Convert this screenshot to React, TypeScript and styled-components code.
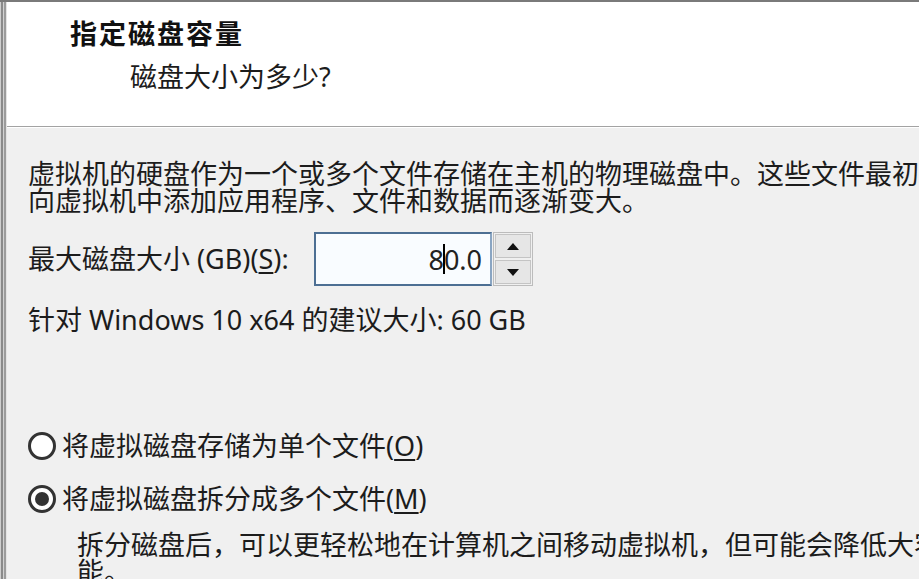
import styled, { createGlobalStyle } from "styled-components";

const GlobalStyle = createGlobalStyle`
  html, body {
    margin: 0;
    padding: 0;
    background: #f0f0f0;
  }
  body {
    font-family: "Noto Sans", "Noto Sans CJK SC", sans-serif;
    color: #1c1c1c;
    overflow: hidden;
  }
`;

const Window = styled.div`
  width: 919px;
  height: 579px;
  box-sizing: border-box;
  display: flex;
  overflow: hidden;
  background: #f0f0f0;
  border-top: 2px solid #7a7a7a;
`;

const Frame = styled.div`
  flex: 0 0 7px;
  background: linear-gradient(
    to right,
    #cfcfcf 0 1px,
    #8a8a8a 1px 3px,
    #d2d2d2 3px 4px,
    #9c9c9c 4px 6px,
    #e4e4e4 6px 7px
  );
`;

const Content = styled.div`
  flex: 1;
  min-width: 0;
  display: flex;
  flex-direction: column;
`;

const Header = styled.header`
  flex: 0 0 125px;
  background: #ffffff;
  border-bottom: 1px solid #a3a3a3;
  box-shadow: 0 1px 0 #ffffff;
  box-sizing: border-box;
  padding: 17px 0 0 63px;
  display: flex;
  flex-direction: column;
`;

const Title = styled.h1`
  margin: 0;
  font-size: 27px;
  line-height: 30px;
  font-weight: 700;
  letter-spacing: 2px;
  color: #111;
`;

const Subtitle = styled.div`
  margin: 13px 0 0 60px;
  font-size: 27px;
  line-height: 30px;
`;

const Body = styled.main`
  flex: 0 0 auto;
  padding: 33px 0 0 21px;
  display: flex;
  flex-direction: column;
`;

const Paragraph = styled.p`
  margin: 0;
  font-size: 27px;
  line-height: 27px;
  white-space: nowrap;
`;

const SizeRow = styled.div`
  display: flex;
  align-items: center;
  margin-top: 18px;
  height: 54px;
`;

const Label = styled.label`
  font-size: 27px;
  line-height: 30px;
  width: 286px;
  white-space: nowrap;
`;

const Key = styled.span`
  text-decoration: underline;
  text-underline-offset: 3px;
  text-decoration-thickness: 2px;
`;

const Field = styled.div`
  width: 178px;
  height: 54px;
  box-sizing: border-box;
  border: 2px solid #4d6f93;
  border-right-color: #8aa5c2;
  background: #f9fcff;
  display: flex;
  align-items: center;
  justify-content: flex-end;
  padding-right: 8px;
  font-size: 27px;
  color: #222;
`;

const Caret = styled.span`
  display: inline-block;
  width: 2px;
  height: 30px;
  background: #000;
  margin: 0 -1px;
  vertical-align: middle;
`;

const Spinner = styled.div`
  width: 40px;
  height: 54px;
  margin-left: 1px;
  box-sizing: border-box;
  border: 1px solid #bcbcbc;
  display: flex;
  flex-direction: column;
  background: #f0f0f0;
`;

const SpinButton = styled.div<{ $down?: boolean }>`
  flex: 1;
  margin: 1px;
  background: #e6e6e6;
  border: 1px solid #c4c4c4;
  display: flex;
  align-items: center;
  justify-content: center;
  &::after {
    content: "";
    width: 0;
    height: 0;
    border-left: 6px solid transparent;
    border-right: 6px solid transparent;
    ${(p) =>
      p.$down ? "border-top: 7px solid #111;" : "border-bottom: 7px solid #111;"}
  }
`;

const Hint = styled.div`
  margin-top: 19px;
  font-size: 27px;
  line-height: 30px;
  white-space: nowrap;
`;

const Options = styled.div`
  margin-top: 96px;
  display: flex;
  flex-direction: column;
  gap: 23px;
`;

const Option = styled.div`
  display: flex;
  align-items: center;
  gap: 6px;
  font-size: 27px;
  line-height: 30px;
  white-space: nowrap;
`;

const Radio = styled.span<{ $checked?: boolean }>`
  flex: 0 0 28px;
  height: 28px;
  box-sizing: border-box;
  border-radius: 50%;
  border: 3px solid #333;
  background: #fff;
  display: flex;
  align-items: center;
  justify-content: center;
  &::after {
    content: "";
    width: 14px;
    height: 14px;
    border-radius: 50%;
    background: ${(p) => (p.$checked ? "#333" : "transparent")};
  }
`;

const Description = styled.p`
  margin: 17px 0 0 49px;
  font-size: 27px;
  line-height: 27px;
  white-space: nowrap;
`;

export default function App() {
  return (
    <>
      <GlobalStyle />
      <Window>
        <Frame />
        <Content>
          <Header>
            <Title>指定磁盘容量</Title>
            <Subtitle>磁盘大小为多少?</Subtitle>
          </Header>
          <Body>
            <Paragraph>
              虚拟机的硬盘作为一个或多个文件存储在主机的物理磁盘中。这些文件最初很小，随着您
              <br />
              向虚拟机中添加应用程序、文件和数据而逐渐变大。
            </Paragraph>
            <SizeRow>
              <Label>
                最大磁盘大小 (GB)(<Key>S</Key>):
              </Label>
              <Field>
                8<Caret />0.0
              </Field>
              <Spinner>
                <SpinButton />
                <SpinButton $down />
              </Spinner>
            </SizeRow>
            <Hint>针对 Windows 10 x64 的建议大小: 60 GB</Hint>
            <Options>
              <Option>
                <Radio />
                <span>
                  将虚拟磁盘存储为单个文件(<Key>O</Key>)
                </span>
              </Option>
              <Option>
                <Radio $checked />
                <span>
                  将虚拟磁盘拆分成多个文件(<Key>M</Key>)
                </span>
              </Option>
            </Options>
            <Description>
              拆分磁盘后，可以更轻松地在计算机之间移动虚拟机，但可能会降低大容量磁盘的性
              <br />
              能。
            </Description>
          </Body>
        </Content>
      </Window>
    </>
  );
}
